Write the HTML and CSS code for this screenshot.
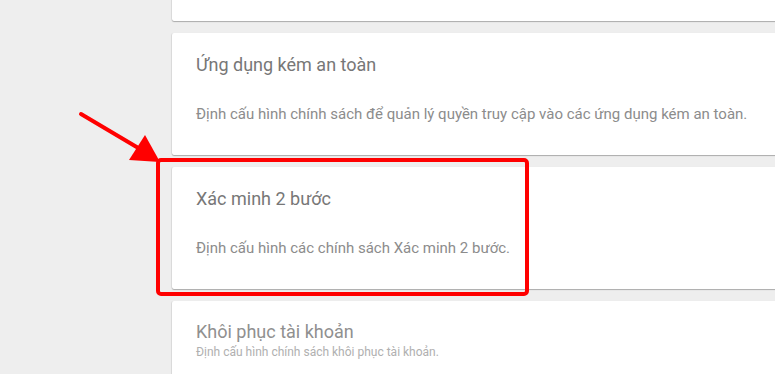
FILE: index.html
```html
<!DOCTYPE html>
<html lang="vi">
<head>
    <meta charset="UTF-8">
    <meta name="viewport" content="width=device-width, initial-scale=1.0">
    <title>Bảo mật</title>
    <link rel="stylesheet" href="styles.css">
</head>
<body>

    <div class="settings">
        <!-- Thẻ phía trên (bị cắt) -->
        <div class="card card-top"></div>

        <div class="card">
            <h2 class="card-title">Ứng dụng kém an toàn</h2>
            <p class="card-desc">Định cấu hình chính sách để quản lý quyền truy cập vào các ứng dụng kém an toàn.</p>
        </div>

        <div class="card">
            <h2 class="card-title">Xác minh 2 bước</h2>
            <p class="card-desc">Định cấu hình các chính sách Xác minh 2 bước.</p>
        </div>

        <div class="card card-loading">
            <h2 class="card-title">Khôi phục tài khoản</h2>
            <p class="card-desc">Định cấu hình chính sách khôi phục tài khoản.</p>
        </div>
    </div>

    <!-- Chú thích màu đỏ -->
    <svg class="annotation" width="775" height="374" viewBox="0 0 775 374">
        <line x1="81" y1="114" x2="140" y2="149" stroke="#ff0000" stroke-width="4" stroke-linecap="round"/>
        <polygon points="129,160 145,135 160,162" fill="#ff0000"/>
        <rect x="158" y="160" width="369" height="134" rx="3" fill="none" stroke="#ff0000" stroke-width="4"/>
    </svg>

</body>
</html>
```

FILE: styles.css
```css
body {
    font-family: Roboto, "Noto Sans", Arial, sans-serif;
    background-color: #eeeeee;
    margin: 0;
    padding: 0;
    overflow: hidden;
    height: 374px;
    position: relative;
}

.settings {
    margin: -100px 0 0 170px;
    width: 603px;
    display: flex;
    flex-direction: column;
    gap: 12px;
    overflow: hidden;
    padding: 0 0 2px 2px;
}

.card {
    background-color: white;
    border-radius: 2px 0 0 2px;
    box-shadow: 0 1px 1px rgba(0, 0, 0, 0.28), -1px 0 1px rgba(0, 0, 0, 0.06);
    padding: 20px 24px 0;
    height: 122px;
    box-sizing: border-box;
    margin-right: -10px;
}

.card-top {
    height: 121px;
}

.card-title {
    margin: 0;
    font-size: 18px;
    line-height: 24px;
    font-weight: 400;
    color: #777777;
}

.card-desc {
    margin: 27px 0 0;
    font-size: 15px;
    line-height: 20px;
    color: #8c8c8c;
}

.card-loading {
    padding-top: 19px;
}

.card-loading .card-title {
    color: #909090;
}

.card-loading .card-desc {
    margin-top: 0;
    font-size: 12px;
    line-height: 16px;
    color: #b0b0b0;
}

.annotation {
    position: absolute;
    left: 0;
    top: 0;
}
```
